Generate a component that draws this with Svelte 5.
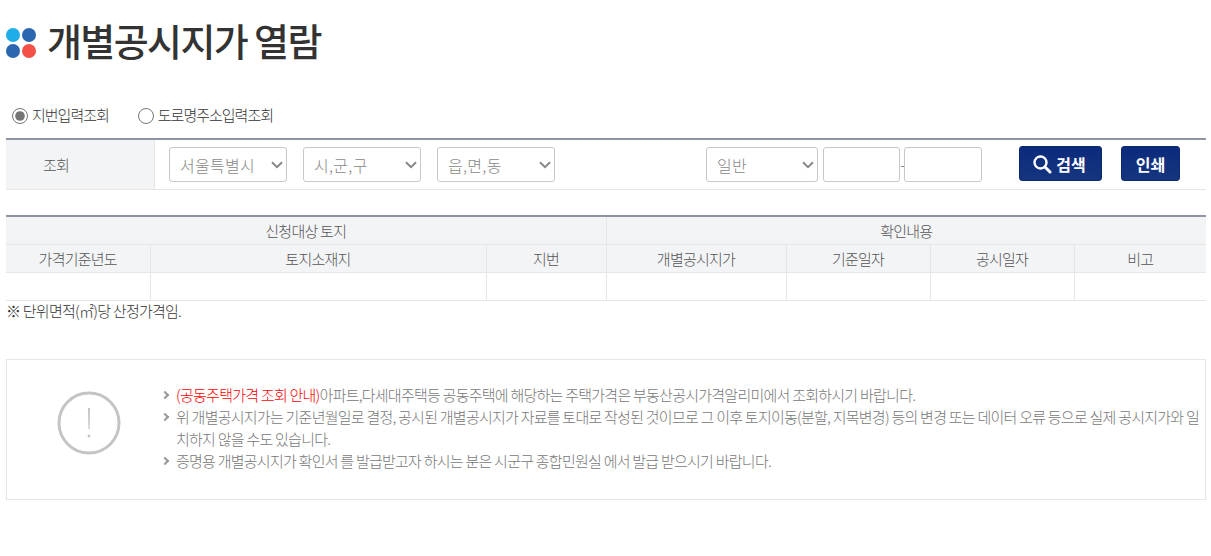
<script>
  const heads = ['가격기준년도', '토지소재지', '지번', '개별공시지가', '기준일자', '공시일자', '비고'];
  const widths = [144, 336, 120, 180, 144, 144, 132];
</script>

{#snippet picker(label, cls)}
  <span class="picker {cls}">
    <select><option>{label}</option></select>
    <svg class="chev" width="12" height="8" viewBox="0 0 12 8" aria-hidden="true">
      <path d="M1 1.2l5 5 5-5" fill="none" stroke="#888" stroke-width="2" />
    </svg>
  </span>
{/snippet}

<main class="page">
  <h1 class="title">
    <span class="dots" aria-hidden="true">
      <i class="d1"></i><i class="d2"></i><i class="d3"></i><i class="d4"></i>
    </span>
    개별공시지가 열람
  </h1>

  <div class="radios">
    <label><input type="radio" name="mode" checked /><span>지번입력조회</span></label>
    <label><input type="radio" name="mode" /><span>도로명주소입력조회</span></label>
  </div>

  <section class="search">
    <div class="search-label">조회</div>
    <div class="search-body">
      <div class="selects">
        {@render picker('서울특별시', 'region')}
        {@render picker('시,군,구', 'region')}
        {@render picker('읍,면,동', 'region')}
      </div>
      <div class="jibun">
        {@render picker('일반', 'kind')}
        <input type="text" class="num" />
        <span class="dash">-</span>
        <input type="text" class="num second" />
      </div>
      <div class="buttons">
        <button class="btn search-btn" type="button">
          <svg width="20" height="20" viewBox="0 0 20 20" aria-hidden="true">
            <circle cx="8.5" cy="8.5" r="6" fill="none" stroke="#fff" stroke-width="2.4" />
            <path d="M13 13l5 5" stroke="#fff" stroke-width="3" stroke-linecap="round" />
          </svg>
          검색
        </button>
        <button class="btn print-btn" type="button">인쇄</button>
      </div>
    </div>
  </section>

  <table class="result">
    <colgroup>
      {#each widths as w}<col style="width:{w}px" />{/each}
    </colgroup>
    <thead>
      <tr>
        <th colspan="3">신청대상 토지</th>
        <th colspan="4">확인내용</th>
      </tr>
      <tr>
        {#each heads as h}<th>{h}</th>{/each}
      </tr>
    </thead>
    <tbody>
      <tr>
        {#each heads as _}<td></td>{/each}
      </tr>
    </tbody>
  </table>

  <p class="note">※ 단위면적(㎡)당 산정가격임.</p>

  <section class="notice">
    <div class="notice-icon">
      <svg width="64" height="64" viewBox="0 0 64 64" aria-hidden="true">
        <circle cx="32" cy="32" r="30" fill="none" stroke="#c4c4c4" stroke-width="3" />
        <path d="M31 17h2l-.4 21h-1.2z" fill="#c4c4c4" />
        <circle cx="32" cy="45" r="1.4" fill="#c4c4c4" />
      </svg>
    </div>
    <ul>
      <li><span class="red">(공동주택가격 조회 안내)</span>아파트,다세대주택등 공동주택에 해당하는 주택가격은 부동산공시가격알리미에서 조회하시기 바랍니다.</li>
      <li>위 개별공시지가는 기준년월일로 결정, 공시된 개별공시지가 자료를 토대로 작성된 것이므로 그 이후 토지이동(분할, 지목변경) 등의 변경 또는 데이터 오류 등으로 실제 공시지가와 일치하지 않을 수도 있습니다.</li>
      <li>증명용 개별공시지가 확인서 를 발급받고자 하시는 분은 시군구 종합민원실 에서 발급 받으시기 바랍니다.</li>
    </ul>
  </section>
</main>

<style>
  :global(body) {
    margin: 0;
    background: #fff;
  }

  .page {
    box-sizing: border-box;
    width: 1211px;
    height: 556px;
    padding: 0 5px 0 6px;
    overflow: hidden;
    font-family: "Noto Sans CJK KR", "Noto Sans", sans-serif;
    font-size: 15px;
    font-weight: 300;
    color: #333;
    letter-spacing: -0.75px;
  }

  .title {
    box-sizing: border-box;
    display: flex;
    align-items: center;
    gap: 11px;
    height: 84px;
    padding-bottom: 6px;
    margin: 0;
    font-size: 38px;
    font-weight: 500;
    letter-spacing: -1.6px;
    color: #333;
  }

  .dots {
    display: grid;
    grid-template-columns: 14px 14px;
    gap: 2px;
    flex: none;
    margin-top: 8px;
  }

  .dots i {
    width: 14px;
    height: 14px;
    border-radius: 50%;
  }

  .d1 { background: #1fade8; }
  .d2, .d3 { background: #2b67b1; }
  .d4 { background: #f4504a; }

  .radios {
    display: flex;
    gap: 29px;
    height: 54px;
    align-items: flex-start;
    padding: 20px 0 0 6px;
    box-sizing: border-box;
    letter-spacing: -1px;
  }

  .radios label {
    display: flex;
    align-items: center;
    gap: 4px;
    height: 24px;
  }

  .radios span {
    padding-bottom: 3px;
  }

  .radios input {
    width: 16px;
    height: 16px;
    margin: 0;
    accent-color: #767676;
  }

  .search {
    display: flex;
    height: 52px;
    border-top: 2px solid #8c95a1;
    border-bottom: 1px solid #e6e6e6;
    box-sizing: border-box;
  }

  .search-label {
    width: 149px;
    flex: none;
    padding-left: 37px;
    box-sizing: border-box;
    background: #f3f4f6;
    border-right: 1px solid #e6e6e6;
    line-height: 49px;
    color: #555;
  }

  .search-body {
    display: flex;
    align-items: center;
    flex: 1;
    padding-left: 14px;
    height: 49px;
  }

  .picker {
    position: relative;
    display: block;
    height: 35px;
  }

  .picker select {
    appearance: none;
    width: 100%;
  }

  .chev {
    position: absolute;
    right: 4.5px;
    top: 14px;
    pointer-events: none;
  }

  select,
  input[type="text"] {
    display: block;
    box-sizing: border-box;
    height: 35px;
    background: #fff;
    border: 1px solid #c8c8c8;
    border-radius: 3px;
    font-family: inherit;
    font-size: 16px;
    font-weight: 300;
    letter-spacing: 0.3px;
    color: #888;
    padding: 0 10px;
  }

  .selects {
    display: flex;
    gap: 16px;
  }

  .region {
    width: 118px;
  }

  .jibun {
    display: flex;
    align-items: center;
    margin-left: 151px;
  }

  .kind {
    width: 112px;
    margin-right: 5px;
  }

  .num {
    width: 77px;
  }

  .num.second {
    width: 78px;
  }

  .dash {
    width: 4px;
    color: #333;
    font-size: 12px;
    text-align: center;
  }

  .buttons {
    display: flex;
    gap: 19px;
    margin-left: 37px;
    margin-bottom: 2px;
  }

  .btn {
    box-sizing: border-box;
    height: 35px;
    border: 1px solid #0d2a70;
    border-radius: 3px;
    background: linear-gradient(#0c2a7c, #15357f);
    color: #fff;
    font-family: inherit;
    font-size: 16px;
    font-weight: 700;
    letter-spacing: 0;
    display: flex;
    align-items: center;
    justify-content: center;
    gap: 4px;
    padding: 0;
  }

  .search-btn {
    width: 83px;
    padding-right: 3px;
  }

  .print-btn {
    width: 59px;
  }

  .result {
    table-layout: fixed;
    width: 1200px;
    margin-top: 25px;
    border-collapse: collapse;
    border-top: 2px solid #8c95a1;
  }

  .result th,
  .result td {
    height: 28px;
    padding: 0;
    box-sizing: border-box;
    border: 1px solid #e6e6e6;
    border-top: 0;
    text-align: center;
    font-weight: 300;
    color: #555;
  }

  .result th {
    background: #f3f4f6;
  }

  .result tr > :first-child {
    border-left: 0;
  }

  .result tr > :last-child {
    border-right: 0;
  }

  .note {
    margin: 0;
    height: 58px;
    line-height: 20px;
    color: #333;
  }

  .notice {
    box-sizing: border-box;
    display: flex;
    align-items: center;
    height: 141px;
    border: 1px solid #e6e6e6;
  }

  .notice-icon {
    flex: none;
    width: 154px;
    display: flex;
    justify-content: center;
    padding-left: 10px;
    padding-bottom: 12px;
    box-sizing: border-box;
  }

  .notice ul {
    list-style: none;
    margin: 0;
    padding: 0 0 2px;
    color: #777;
    line-height: 22px;
  }

  .notice li {
    position: relative;
    padding-left: 15px;
  }

  .notice li::before {
    content: "";
    position: absolute;
    left: 1px;
    top: 8px;
    width: 4px;
    height: 4px;
    border-top: 2px solid #999;
    border-right: 2px solid #999;
    transform: rotate(45deg);
  }

  .red {
    color: #f00;
  }
</style>
